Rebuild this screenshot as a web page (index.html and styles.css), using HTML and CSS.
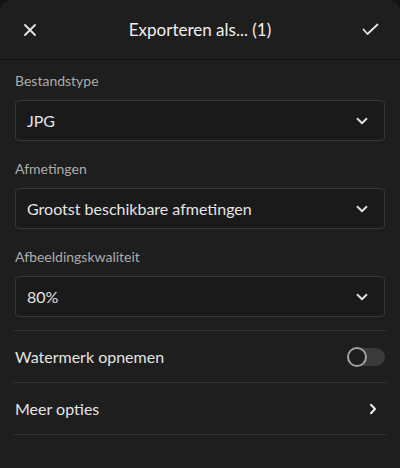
FILE: index.html
```html
<!DOCTYPE html>
<html lang="nl">
<head>
  <meta charset="UTF-8">
  <title>Exporteren als</title>
  <link rel="stylesheet" href="styles.css">
</head>
<body>
  <div class="panel">
    <!-- Header -->
    <header class="topbar">
      <button class="icon-btn" aria-label="Sluiten">
        <svg width="14" height="14" viewBox="0 0 14 14"><path d="M2 2 L12 12 M12 2 L2 12" stroke="#e6e6e6" stroke-width="1.8" stroke-linecap="round"/></svg>
      </button>
      <h1>Exporteren als... (1)</h1>
      <button class="icon-btn" aria-label="Bevestigen">
        <svg width="17" height="13" viewBox="0 0 17 13"><path d="M1.5 6.5 L5.5 11 L15.5 1.5" fill="none" stroke="#e6e6e6" stroke-width="1.8" stroke-linecap="round" stroke-linejoin="round"/></svg>
      </button>
    </header>

    <!-- Fields -->
    <section class="fields">
      <div class="field">
        <label>Bestandstype</label>
        <div class="select">
          <span>JPG</span>
          <svg class="chev" width="12" height="8" viewBox="0 0 12 8"><path d="M1.5 1.8 L6 6.2 L10.5 1.8" fill="none" stroke="#e0e0e0" stroke-width="1.9" stroke-linecap="round" stroke-linejoin="round"/></svg>
        </div>
      </div>
      <div class="field">
        <label>Afmetingen</label>
        <div class="select">
          <span>Grootst beschikbare afmetingen</span>
          <svg class="chev" width="12" height="8" viewBox="0 0 12 8"><path d="M1.5 1.8 L6 6.2 L10.5 1.8" fill="none" stroke="#e0e0e0" stroke-width="1.9" stroke-linecap="round" stroke-linejoin="round"/></svg>
        </div>
      </div>
      <div class="field">
        <label>Afbeeldingskwaliteit</label>
        <div class="select">
          <span>80%</span>
          <svg class="chev" width="12" height="8" viewBox="0 0 12 8"><path d="M1.5 1.8 L6 6.2 L10.5 1.8" fill="none" stroke="#e0e0e0" stroke-width="1.9" stroke-linecap="round" stroke-linejoin="round"/></svg>
        </div>
      </div>
    </section>

    <!-- Rows -->
    <section class="rows">
      <div class="row">
        <span>Watermerk opnemen</span>
        <div class="toggle"><div class="knob"></div></div>
      </div>
      <div class="row">
        <span>Meer opties</span>
        <svg class="arrow" width="8" height="12" viewBox="0 0 8 12"><path d="M2 1.8 L6 6 L2 10.2" fill="none" stroke="#f0f0f0" stroke-width="2" stroke-linecap="round" stroke-linejoin="round"/></svg>
      </div>
    </section>
  </div>
</body>
</html>
```

FILE: styles.css
```css
/* Page */
html, body { margin: 0; padding: 0; }
body {
  background: #121212;
  font-family: Lato, "Noto Sans", sans-serif;
  color: #e4e4e4;
  width: 400px;
  height: 468px;
  overflow: hidden;
}
.panel {
  background: #1e1e1e;
  height: 468px;
  border-radius: 12px 12px 0 0;
}

/* Header */
.topbar {
  height: 59px;
  display: flex;
  align-items: center;
  justify-content: space-between;
  padding: 0 21px 0 21px;
  border-bottom: 1px solid #131313;
}
.topbar h1 {
  margin: 0;
  font-size: 17px;
  font-weight: 400;
  color: #f0f0f0;
}
.icon-btn {
  background: none;
  border: none;
  padding: 0;
  width: 17px;
  height: 18px;
  display: flex;
  align-items: center;
  justify-content: center;
}

/* Select fields */
.fields {
  padding: 11px 15px 0;
  display: flex;
  flex-direction: column;
  gap: 18px;
}
.field label {
  display: block;
  height: 20px;
  line-height: 20px;
  font-size: 14px;
  color: #ababab;
  margin-bottom: 9px;
}
.select {
  height: 39px;
  border: 1px solid #373737;
  border-radius: 4px;
  background: #1a1a1a;
  display: flex;
  align-items: center;
  justify-content: space-between;
  padding: 0 16px 0 11px;
  font-size: 16px;
  color: #e4e4e4;
}

/* Rows */
.rows {
  margin: 13px 13px 0;
  border-top: 1px solid #303030;
}
.row {
  height: 51px;
  border-bottom: 1px solid #303030;
  display: flex;
  align-items: center;
  justify-content: space-between;
  padding: 0 2px;
  font-size: 16px;
}
.row .arrow { margin-right: 8px; }
.toggle {
  width: 38px;
  height: 18px;
  border-radius: 9px;
  background: #3a3a3a;
  position: relative;
}
.knob {
  position: absolute;
  left: 0;
  top: -1px;
  width: 16px;
  height: 16px;
  border-radius: 50%;
  border: 2px solid #a0a0a0;
  background: #1e1e1e;
}
```
